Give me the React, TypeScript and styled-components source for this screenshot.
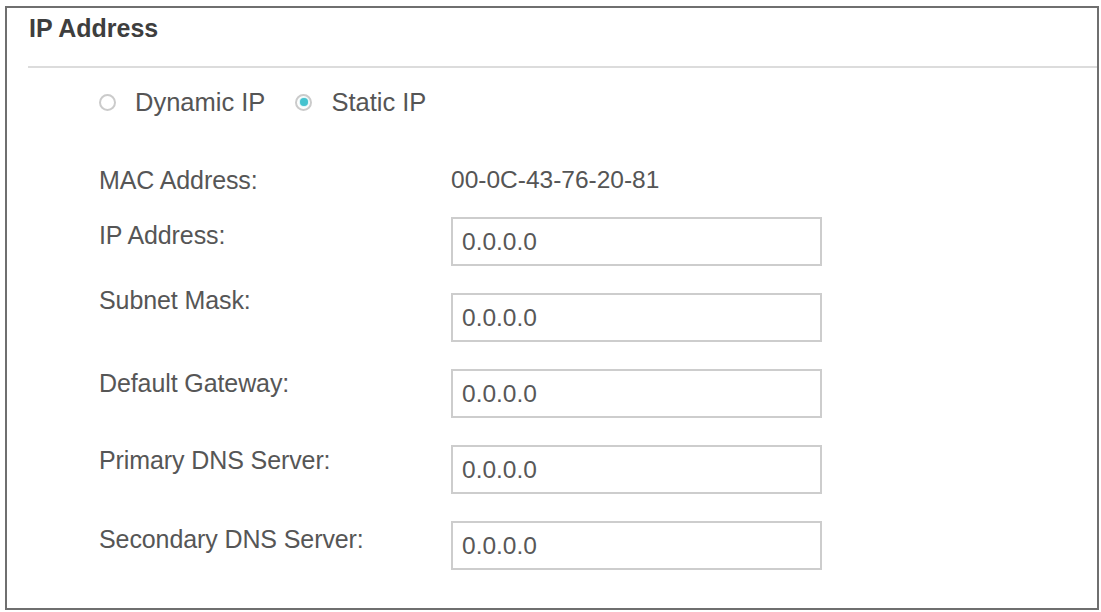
import React from "react";
import styled, { createGlobalStyle } from "styled-components";

const GlobalStyle = createGlobalStyle`
  html, body {
    margin: 0;
    padding: 0;
    background: #ffffff;
  }
  body {
    font-family: "Liberation Sans", Arial, sans-serif;
  }
`;

const Panel = styled.section`
  box-sizing: border-box;
  margin: 6px 2px 0 5px;
  height: 604px;
  border: 2px solid #6f6f6f;
  background: #ffffff;
  font-family: "Liberation Sans", Arial, sans-serif;
`;

const Header = styled.div`
  height: 58px;
  margin-left: 21px;
  padding-left: 1px;
  border-bottom: 2px solid #dcdcdc;
`;

const Title = styled.h2`
  margin: 0;
  padding-top: 5px;
  font-size: 25px;
  line-height: 30px;
  font-weight: bold;
  color: #3e3e3e;
`;

const Body = styled.div`
  padding-left: 92px;
`;

const RadioRow = styled.div`
  display: flex;
  align-items: center;
  height: 30px;
  margin-top: 19px;
  font-size: 25.5px;
  color: #555555;
`;

const RadioOption = styled.label`
  display: flex;
  align-items: center;
  gap: 19px;
  margin-right: 30px;
`;

const RadioDot = styled.span<{ $checked?: boolean }>`
  box-sizing: border-box;
  position: relative;
  width: 17px;
  height: 17px;
  border-radius: 50%;
  border: 2px solid #cbcbcb;
  background: #ffffff;

  &::after {
    content: "";
    display: ${(p) => (p.$checked ? "block" : "none")};
    position: absolute;
    left: 2.5px;
    top: 2.5px;
    width: 8px;
    height: 8px;
    border-radius: 50%;
    background: #45c3cf;
    box-shadow: 0 0 2px #7fd7df;
  }
`;

const InfoRow = styled.div`
  display: flex;
  align-items: center;
  height: 30px;
  margin-top: 48px;
  margin-bottom: 22px;
`;

const FieldList = styled.div`
  display: flex;
  flex-direction: column;
  gap: 27px;
`;

const FieldRow = styled.div`
  display: flex;
  align-items: flex-start;
  height: 49px;
`;

const Label = styled.span<{ $shift?: number }>`
  width: 352px;
  flex-shrink: 0;
  font-size: 25px;
  line-height: 30px;
  margin-top: ${(p) => p.$shift ?? 0}px;
  color: #565656;
  letter-spacing: -0.1px;
`;

const Value = styled.span`
  font-size: 24.5px;
  line-height: 30px;
  color: #555555;
`;

const TextInput = styled.input`
  box-sizing: border-box;
  width: 371px;
  height: 49px;
  margin: 0;
  padding: 0 0 0 9px;
  border: 2px solid #cdcdcd;
  background: #ffffff;
  font-family: "Liberation Sans", Arial, sans-serif;
  font-size: 24.5px;
  color: #585858;
  outline: none;
`;

const fields = [
  { label: "IP Address:", shift: 3 },
  { label: "Subnet Mask:", shift: -8 },
  { label: "Default Gateway:", shift: -1 },
  { label: "Primary DNS Server:", shift: 0 },
  { label: "Secondary DNS Server:", shift: 3 },
];

export default function App() {
  return (
    <>
      <GlobalStyle />
      <Panel>
        <Header>
          <Title>IP Address</Title>
        </Header>
        <Body>
          <RadioRow>
            <RadioOption>
              <RadioDot />
              Dynamic IP
            </RadioOption>
            <RadioOption>
              <RadioDot $checked />
              Static IP
            </RadioOption>
          </RadioRow>
          <InfoRow>
            <Label>MAC Address:</Label>
            <Value>00-0C-43-76-20-81</Value>
          </InfoRow>
          <FieldList>
            {fields.map((f) => (
              <FieldRow key={f.label}>
                <Label $shift={f.shift}>{f.label}</Label>
                <TextInput defaultValue="0.0.0.0" />
              </FieldRow>
            ))}
          </FieldList>
        </Body>
      </Panel>
    </>
  );
}
